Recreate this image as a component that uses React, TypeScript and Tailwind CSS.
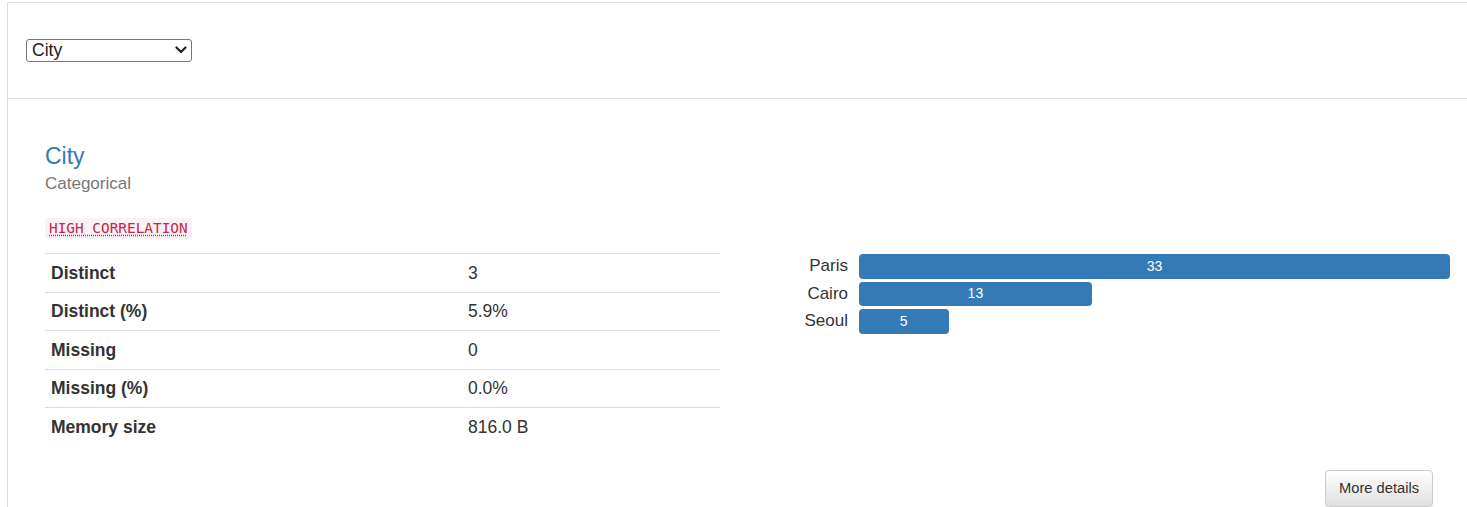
import React from "react";

const rows: [string, string][] = [
  ["Distinct", "3"],
  ["Distinct (%)", "5.9%"],
  ["Missing", "0"],
  ["Missing (%)", "0.0%"],
  ["Memory size", "816.0 B"],
];

const freqs: [string, number][] = [
  ["Paris", 33],
  ["Cairo", 13],
  ["Seoul", 5],
];

const MAX = 33;
const TRACK = 591;

export default function App() {
  return (
    <div className="w-[1467px] h-[507px] overflow-hidden bg-white text-[#333] font-['Liberation_Sans',Arial,sans-serif]">
      <div className="ml-[7px] mt-[2px] w-[1470px] min-h-[520px] border-l border-t border-[#dddddd]">
        {/* header with select */}
        <div className="h-[96px] border-b border-[#dddddd] pl-[18px] pt-[36px]">
          <div className="relative inline-block">
            <select
              defaultValue="City"
              className="appearance-none block h-[23px] w-[166px] border border-[#767676] rounded-[3px] bg-white pl-[5px] text-[17.5px] leading-[21px] text-[#222] outline-none"
            >
              <option>City</option>
            </select>
            <svg
              className="pointer-events-none absolute right-[5px] top-[7px]"
              width="12"
              height="8"
              viewBox="0 0 12 8"
              fill="none"
            >
              <path d="M1.5 1.5 L6 6 L10.5 1.5" stroke="#222" strokeWidth="2.2" strokeLinecap="round" strokeLinejoin="round" />
            </svg>
          </div>
        </div>

        {/* content */}
        <div className="pl-[37px] pt-[45px]">
          <div className="h-[25px] leading-[25px] text-[23px] text-[#337ab7]">City</div>
          <div className="mt-[3px] h-[24px] leading-[24px] text-[17px] text-[#777]">Categorical</div>
          <div className="mt-[22px] flex h-[21px] items-start">
            <abbr
              title="This variable has a high correlation with other variables"
              className="block h-[21px] rounded-[4px] bg-[#f9f2f4] px-[4px] pt-[1px] font-['DejaVu_Sans_Mono',monospace] text-[14.4px] leading-[18px] text-[#c7254e] underline decoration-dotted decoration-[#c7254e] underline-offset-[2px]"
            >
              HIGH CORRELATION
            </abbr>
          </div>

          <div className="mt-[14px] flex items-start">
            {/* stats table */}
            <div className="w-[675px]">
              {rows.map(([k, v]) => (
                <div
                  key={k}
                  className="grid h-[38.5px] grid-cols-[417px_1fr] items-center border-t border-[#dddddd] text-[17.5px]"
                >
                  <div className="px-[6px] font-bold">{k}</div>
                  <div className="px-[6px]">{v}</div>
                </div>
              ))}
            </div>

            {/* frequency bars */}
            <div className="ml-[40px] mt-[1px] flex flex-col gap-[3px]">
              {freqs.map(([label, n]) => (
                <div key={label} className="flex h-[24.5px] items-center gap-[11px]">
                  <div className="w-[88px] text-right text-[17px] leading-[24px]">{label}</div>
                  <div className="w-[591px] h-full">
                    <div
                      className="flex h-full items-center justify-center rounded-[4px] bg-[#337ab7] text-[14px] text-white"
                      style={{ width: `${(n / MAX) * TRACK}px` }}
                    >
                      {n}
                    </div>
                  </div>
                </div>
              ))}
            </div>
          </div>

          <div className="mt-[24.5px] flex w-[1405px] justify-end">
            <button className="mr-[17px] h-[37px] rounded-[4px] border border-[#cccccc] bg-linear-to-b from-white to-[#e0e0e0] px-[13px] text-[14.7px] text-[#333] shadow-[0_1px_1px_rgba(0,0,0,0.075)]">
              More details
            </button>
          </div>
        </div>
      </div>
    </div>
  );
}
